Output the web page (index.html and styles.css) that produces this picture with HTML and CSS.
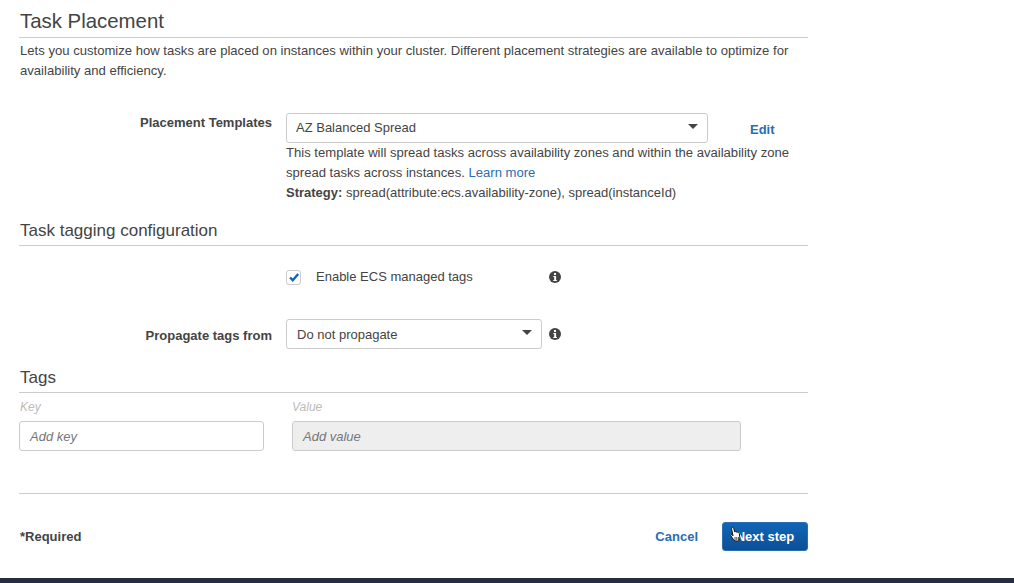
FILE: index.html
```html
<!DOCTYPE html>
<html lang="en">
<head>
    <meta charset="UTF-8">
    <title>Task Placement</title>
    <link rel="stylesheet" href="styles.css">
</head>
<body>

<div class="page">
    <h2 class="title">Task Placement</h2>
    <p class="intro">Lets you customize how tasks are placed on instances within your cluster. Different placement strategies are available to optimize for availability and efficiency.</p>

    <div class="row template-row">
        <label class="row-label">Placement Templates</label>
        <div class="row-control">
            <div class="select select-wide">AZ Balanced Spread<span class="caret"></span></div>
            <p class="help help-long">This template will spread tasks across availability zones and within the availability zone spread tasks across instances. <a href="#">Learn more</a></p>
            <p class="help"><b>Strategy:</b> spread(attribute:ecs.availability-zone), spread(instanceId)</p>
        </div>
        <a class="edit" href="#">Edit</a>
    </div>

    <h3 class="subtitle tagging">Task tagging configuration</h3>

    <div class="row check-row">
        <div class="row-label"></div>
        <div class="check-control">
            <span class="checkbox">
                <svg width="12" height="12" viewBox="0 0 12 12"><path d="M2 6.500l2.800 2.700L10.200 3" fill="none" stroke="#1166bb" stroke-width="2.400"/></svg>
            </span>
            <span class="check-text">Enable ECS managed tags</span>
            <svg class="info" width="12" height="12" viewBox="0 0 12 12"><circle cx="6" cy="6" r="6" fill="#444"/><rect x="5" y="2" width="2" height="2" fill="#fff"/><path d="M4.300 5h2.800v4h.8v1H4.300V9h.9V6h-.9z" fill="#fff"/></svg>
        </div>
    </div>

    <div class="row propagate-row">
        <label class="row-label">Propagate tags from</label>
        <div class="select select-small">Do not propagate<span class="caret"></span></div>
        <svg class="info info-side" width="12" height="12" viewBox="0 0 12 12"><circle cx="6" cy="6" r="6" fill="#444"/><rect x="5" y="2" width="2" height="2" fill="#fff"/><path d="M4.300 5h2.800v4h.8v1H4.300V9h.9V6h-.9z" fill="#fff"/></svg>
    </div>

    <h3 class="subtitle tags">Tags</h3>

    <div class="tag-grid">
        <span class="tag-head">Key</span>
        <span class="tag-head tag-head-value">Value</span>
        <div class="tag-input">Add key</div>
        <div class="tag-input disabled">Add value</div>
    </div>

    <div class="footer">
        <b class="required">*Required</b>
        <div class="actions">
            <a class="cancel" href="#">Cancel</a>
            <div class="next">Next step
                <svg class="cursor" width="14" height="18" viewBox="0 0 14 18"><path d="M3 1.500c.8-.6 1.500 0 1.700.8l1 3.600c.6-.5 1.300-.3 1.600.3.600-.4 1.300-.2 1.500.4.700-.3 1.400.1 1.500.8l.5 4.100c.1 1.700-.8 3.200-2.400 3.500-1.900.3-3.500-.3-4.400-2L1.800 9.700c-.4-.8.500-1.500 1.200-.9l1 1L2.600 3c-.1-.6 0-1.200.4-1.500z" fill="#fff" stroke="#111" stroke-width="1"/><path d="M6 11v3M7.800 11v3M9.600 11v3" stroke="#111" stroke-width=".8"/></svg>
            </div>
        </div>
    </div>
</div>

<div class="bottom-bar"></div>

</body>
</html>
```

FILE: styles.css
```css
* {
    box-sizing: border-box;
}

html, body {
    height: 100%;
}

body {
    margin: 0;
    background-color: #fff;
    color: #444;
    font-family: "Liberation Sans", Arial, sans-serif;
    font-size: 13px;
    line-height: 20px;
    display: flex;
    flex-direction: column;
    overflow: hidden;
}

a {
    color: #2a6db0;
    text-decoration: none;
}

.page {
    flex: 1;
    width: 789px;
    margin-left: 19px;
}

.title {
    margin: 0;
    height: 38px;
    padding: 9px 0 0 1px;
    font-size: 20.400px;
    line-height: 24px;
    font-weight: normal;
    color: #444;
    border-bottom: 1px solid #ccc;
}

.intro {
    margin: 3px 0 0 1px;
    font-size: 13.100px;
}

.row {
    display: flex;
}

.row-label {
    flex: none;
    width: 253px;
    margin-right: 14px;
    text-align: right;
    font-weight: bold;
}

.template-row {
    margin-top: 32px;
}

.template-row .row-label {
    padding-top: 0;
}

.row-control {
    width: 510px;
}

.select {
    position: relative;
    height: 30px;
    padding: 5px 10px;
    color: #444;
    background-color: #fff;
    border: 1px solid #ccc;
    border-radius: 3px;
}

.select-wide {
    width: 422px;
    padding: 4px 9px;
}

.select-small {
    width: 256px;
}

.caret {
    position: absolute;
    right: 9px;
    top: 10px;
    border-left: 5px solid transparent;
    border-right: 5px solid transparent;
    border-top: 5px solid #444;
}

.help {
    margin: 0;
}

.help-long {
    font-size: 13.080px;
}

.edit {
    margin: 7px 0 0 -46px;
    font-weight: bold;
    height: 20px;
}

.subtitle {
    margin: 0;
    padding-left: 1px;
    font-weight: normal;
    font-size: 17px;
    line-height: 20px;
    color: #444;
    border-bottom: 1px solid #ccc;
}

.tagging {
    margin-top: 18px;
    height: 25px;
}

.check-row {
    margin-top: 21px;
}

.check-control {
    display: flex;
    align-items: center;
    height: 20px;
}

.checkbox {
    display: flex;
    align-items: center;
    justify-content: center;
    width: 15px;
    height: 15px;
    border: 1px solid #ccc;
    border-radius: 3px;
}

.check-text {
    margin-left: 15px;
    width: 233px;
}

.propagate-row {
    margin-top: 32px;
    align-items: center;
}

.propagate-row .row-label {
    padding-top: 4px;
}

.info-side {
    margin-left: 7px;
}

.tags {
    margin-top: 19px;
    height: 25px;
}

.tag-grid {
    display: grid;
    grid-template-columns: 245px 449px;
    column-gap: 28px;
    margin-top: 5px;
}

.tag-head {
    padding-left: 1px;
    font-style: italic;
    font-size: 12px;
    line-height: 19px;
    color: #bbb;
}

.tag-head-value {
    padding-left: 0;
}

.tag-input {
    height: 30px;
    margin-top: 4px;
    padding: 5px 10px;
    font-style: italic;
    color: #777;
    border: 1px solid #ccc;
    border-radius: 3px;
}

.tag-input.disabled {
    background-color: #eee;
}

.footer {
    display: flex;
    justify-content: space-between;
    align-items: center;
    margin-top: 42px;
    padding: 28px 0 0 1px;
    border-top: 1px solid #ccc;
}

.required {
    color: #444;
}

.actions {
    display: flex;
    align-items: center;
}

.cancel {
    font-weight: bold;
    margin-right: 24px;
}

.next {
    position: relative;
    width: 86px;
    height: 29px;
    line-height: 27px;
    text-align: center;
    font-weight: bold;
    color: #fff;
    background: linear-gradient(#1066b8, #0c4f97);
    border: 1px solid #2a6db0;
    border-radius: 3px;
}

.cursor {
    position: absolute;
    left: 6px;
    top: 3px;
}

.bottom-bar {
    flex: none;
    height: 5px;
    background-color: #232f3e;
}
```
